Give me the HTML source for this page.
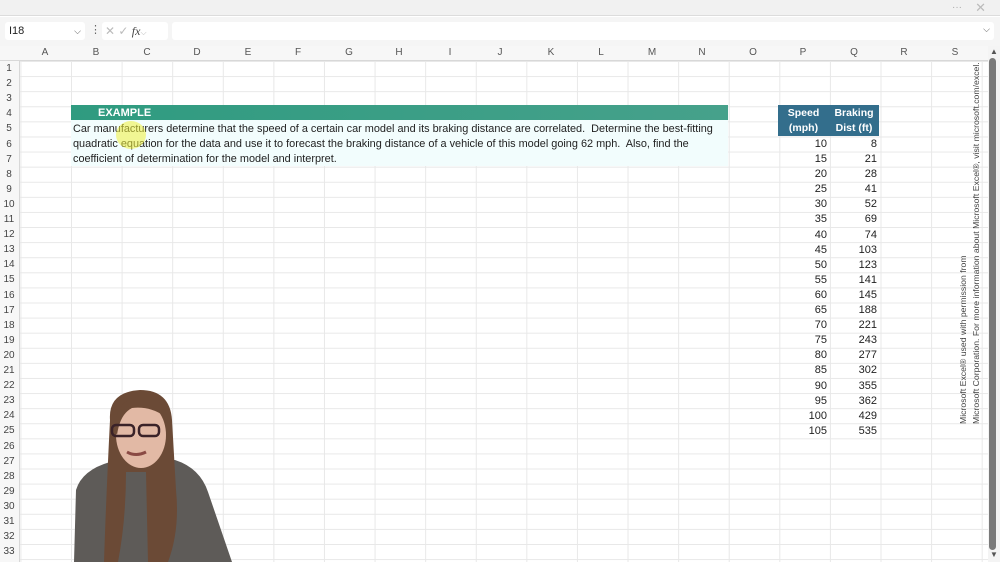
<!DOCTYPE html>
<html><head><meta charset="utf-8"><style>
*{margin:0;padding:0;box-sizing:border-box}
body{width:1000px;height:562px;overflow:hidden;background:#fff;font-family:"Liberation Sans",Arial,sans-serif;position:relative;color:#222}
.a{position:absolute}
#top{left:0;top:0;width:1000px;height:16px;background:#f1f1f1;border-bottom:1px solid #dcdcdc}
#fbar{left:0;top:17px;width:1000px;height:29px;background:#f5f5f5}
#grid{left:20px;top:61px;width:968px;height:501px;
background-image:linear-gradient(to right,#e8e8e8 1px,transparent 1px),linear-gradient(to bottom,#e8e8e8 1px,transparent 1px);
background-size:50.6px 15.1px;background-position:51px 0,0 0}
#colh{left:0;top:46px;width:988px;height:15px;background:#f7f7f7;border-bottom:1px solid #d8d8d8}
#rowh{left:0;top:61px;width:20px;height:501px;background:#f7f7f7;border-right:1px solid #d8d8d8}
.ch{position:absolute;top:47px;font-size:10px;color:#555;width:20px;text-align:center;margin-left:-10px}
.rh{position:absolute;left:0;width:18px;font-size:10px;color:#444;text-align:center;height:15px;line-height:15px}
.t{font-size:10.9px;line-height:15.1px;white-space:nowrap;color:#222}
.n{position:absolute;font-size:11px;text-align:right;width:45px;line-height:15px;color:#222}
</style></head><body>
<div class="a" id="top"></div>
<div class="a" style="right:38px;top:2px;font-size:10px;color:#aaa">···</div>
<div class="a" style="right:14px;top:0px;font-size:13px;color:#bbb">✕</div>
<div class="a" id="fbar"></div>
<div class="a" style="left:5px;top:22px;width:80px;height:18px;background:#fff;border-radius:3px;font-size:11px;line-height:18px;padding-left:4px">I18<span style="position:absolute;right:4px;color:#555;font-size:9px">⌵</span></div>
<div class="a" style="left:90px;top:23px;font-size:11px;color:#666">⋮</div>
<div class="a" style="left:102px;top:22px;width:66px;height:18px;background:#fff;border-radius:3px;font-size:12px;line-height:18px;color:#bbb;padding-left:3px">✕ ✓ <i style="font-family:'Liberation Serif',serif;color:#444">fx</i><span style="font-size:8px">⌵</span></div>
<div class="a" style="left:172px;top:22px;width:822px;height:18px;background:#fff;border-radius:3px"><span style="position:absolute;right:4px;top:2px;font-size:9px;color:#555">⌵</span></div>
<div class="a" id="grid"></div>
<div class="a" id="colh"></div>
<div class="a" id="rowh"></div>
<div class="ch" style="left:45px">A</div><div class="ch" style="left:96px">B</div><div class="ch" style="left:147px">C</div><div class="ch" style="left:197px">D</div><div class="ch" style="left:248px">E</div><div class="ch" style="left:298px">F</div><div class="ch" style="left:349px">G</div><div class="ch" style="left:399px">H</div><div class="ch" style="left:450px">I</div><div class="ch" style="left:500px">J</div><div class="ch" style="left:551px">K</div><div class="ch" style="left:601px">L</div><div class="ch" style="left:652px">M</div><div class="ch" style="left:702px">N</div><div class="ch" style="left:753px">O</div><div class="ch" style="left:803px">P</div><div class="ch" style="left:854px">Q</div><div class="ch" style="left:904px">R</div><div class="ch" style="left:955px">S</div>
<div class="rh" style="top:61px">1</div><div class="rh" style="top:76px">2</div><div class="rh" style="top:91px">3</div><div class="rh" style="top:106px">4</div><div class="rh" style="top:121px">5</div><div class="rh" style="top:137px">6</div><div class="rh" style="top:152px">7</div><div class="rh" style="top:167px">8</div><div class="rh" style="top:182px">9</div><div class="rh" style="top:197px">10</div><div class="rh" style="top:212px">11</div><div class="rh" style="top:227px">12</div><div class="rh" style="top:242px">13</div><div class="rh" style="top:257px">14</div><div class="rh" style="top:272px">15</div><div class="rh" style="top:288px">16</div><div class="rh" style="top:303px">17</div><div class="rh" style="top:318px">18</div><div class="rh" style="top:333px">19</div><div class="rh" style="top:348px">20</div><div class="rh" style="top:363px">21</div><div class="rh" style="top:378px">22</div><div class="rh" style="top:393px">23</div><div class="rh" style="top:408px">24</div><div class="rh" style="top:423px">25</div><div class="rh" style="top:439px">26</div><div class="rh" style="top:454px">27</div><div class="rh" style="top:469px">28</div><div class="rh" style="top:484px">29</div><div class="rh" style="top:499px">30</div><div class="rh" style="top:514px">31</div><div class="rh" style="top:529px">32</div><div class="rh" style="top:544px">33</div>

<div class="a" style="left:71px;top:105px;width:657px;height:15px;background:linear-gradient(to right,#2f9b80,#46a18b);color:#fff;font-weight:bold;font-size:11px;line-height:16px;padding-left:27px">EXAMPLE</div>
<div class="a" style="left:71px;top:120px;width:657px;height:46px;background:#f2fdfd"></div>
<div class="a t" style="left:73px;top:122px">Car manufacturers determine that the speed of a certain car model and its braking distance are correlated.&nbsp; Determine the best-fitting<br>quadratic equation for the data and use it to forecast the braking distance of a vehicle of this model going 62 mph.&nbsp; Also, find the<br>coefficient of determination for the model and interpret.</div>
<div class="a" style="left:116px;top:121px;width:30px;height:28px;border-radius:50%;background:rgba(240,240,60,.55)"></div>

<div class="a" style="left:778px;top:105px;width:101px;height:31px;background:#336e8c;color:#fff;font-weight:bold;font-size:10.5px;line-height:15px;padding-top:2px">
<div class="a" style="left:0;top:1px;width:51px;text-align:center">Speed<br>(mph)</div>
<div class="a" style="left:51px;top:1px;width:50px;text-align:center">Braking<br>Dist (ft)</div></div>
<div class="n" style="left:782px;top:137px;line-height:15.1px">10<br>15<br>20<br>25<br>30<br>35<br>40<br>45<br>50<br>55<br>60<br>65<br>70<br>75<br>80<br>85<br>90<br>95<br>100<br>105</div>
<div class="n" style="left:832px;top:137px;line-height:15.1px">8<br>21<br>28<br>41<br>52<br>69<br>74<br>103<br>123<br>141<br>145<br>188<br>221<br>243<br>277<br>302<br>355<br>362<br>429<br>535</div>

<div class="a" style="left:957px;top:424px;width:360px;transform-origin:0 0;transform:rotate(-90deg);font-size:8.7px;line-height:13px;color:#444;white-space:nowrap">Microsoft Excel® used with permission from<br>Microsoft Corporation. For more information about Microsoft Excel®, visit microsoft.com/excel.</div>

<div class="a" style="left:988px;top:46px;width:12px;height:516px;background:#f4f4f4"></div>
<div class="a" style="left:990px;top:47px;font-size:8px;color:#555">▲</div>
<div class="a" style="left:989px;top:58px;width:7px;height:492px;background:#7a7a7a;border-radius:4px"></div>
<div class="a" style="left:990px;top:550px;font-size:8px;color:#555">▼</div>

<svg class="a" style="left:60px;top:380px" width="200" height="182" viewBox="0 0 200 182">
<path d="M14 182 L16 110 Q22 90 50 82 L115 80 Q140 88 148 112 L172 182Z" fill="#5e5b58"/>
<path d="M50 40 Q48 12 80 10 Q110 10 112 40 L116 110 Q120 150 108 182 L88 182 L86 92 L66 92 Q66 140 58 182 L44 182 Q46 120 50 40Z" fill="#6b4a36"/>
<ellipse cx="81" cy="55" rx="25" ry="33" fill="#e2b9a5"/>
<path d="M54 50 Q56 18 82 16 Q108 18 108 45 L104 36 Q90 26 72 28 Q60 34 57 55Z" fill="#6b4a36"/>
<rect x="52" y="45" width="22" height="11" rx="4" fill="none" stroke="#3a2228" stroke-width="2.5"/>
<rect x="79" y="45" width="20" height="11" rx="4" fill="none" stroke="#3a2228" stroke-width="2.5"/>
<path d="M67 72 Q76 77 86 72" stroke="#8a4a44" stroke-width="3" fill="none"/>
</svg>
</body></html>
